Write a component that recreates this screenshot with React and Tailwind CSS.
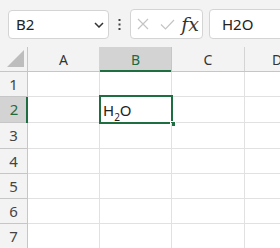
import React from "react";

const rows = [
  { n: 1, h: "h-[25px]" },
  { n: 2, h: "h-[26px]" },
  { n: 3, h: "h-[26px]" },
  { n: 4, h: "h-[25px]" },
  { n: 5, h: "h-[25px]" },
  { n: 6, h: "h-[25px]" },
  { n: 7, h: "h-[25px]" },
];

export default function App() {
  return (
    <div className="w-[280px] h-[248px] overflow-hidden bg-white text-[#262626]" style={{ fontFamily: '"Noto Sans", "Open Sans", sans-serif' }}>
      {/* toolbar */}
      <div className="h-[47px] bg-[#f3f3f3] flex items-start pt-[10px] pl-[8px]">
        <div className="w-[101px] h-[29px] bg-white border border-[#d4d4d4] rounded-[4px] flex items-center justify-between pl-[7px] pr-[4px] shrink-0">
          <span className="text-[15px] leading-none text-[#222]">B2</span>
          <svg width="10" height="6" viewBox="0 0 10 6" className="mt-[1px]">
            <path d="M1 1 L5 5 L9 1" fill="none" stroke="#333" strokeWidth="1.5" />
          </svg>
        </div>
        <div className="w-[21px] h-[29px] flex items-center justify-center shrink-0">
          <svg width="3" height="11" viewBox="0 0 3 11">
            <rect x="0.5" y="0" width="2" height="2" fill="#444" />
            <rect x="0.5" y="4.5" width="2" height="2" fill="#444" />
            <rect x="0.5" y="9" width="2" height="2" fill="#444" />
          </svg>
        </div>
        <div className="w-[73px] h-[30px] -mt-[1px] bg-white border border-[#d4d4d4] rounded-[4px] flex items-center shrink-0">
          <div className="w-[22px] flex justify-center ml-[1px]">
            <svg width="12" height="12" viewBox="0 0 12 12">
              <path d="M1 1 L11 11 M11 1 L1 11" stroke="#c4c4c4" strokeWidth="1.2" fill="none" />
            </svg>
          </div>
          <div className="w-[26px] flex justify-center">
            <svg width="15" height="11" viewBox="0 0 15 11">
              <path d="M1 5.5 L5.5 10 L14 1" stroke="#c4c4c4" strokeWidth="1.2" fill="none" />
            </svg>
          </div>
          <div className="flex-1 flex justify-center pr-[2px]">
            <span className="italic text-[19px] leading-none text-[#333]" style={{ fontFamily: '"DejaVu Serif", "Liberation Serif", serif' }}>fx</span>
          </div>
        </div>
        <div className="ml-[6px] w-[90px] h-[30px] -mt-[1px] bg-white border border-[#d4d4d4] rounded-[4px] flex items-center pl-[12px] shrink-0">
          <span className="text-[15px] leading-none text-[#222]">H2O</span>
        </div>
      </div>

      {/* header row */}
      <div className="flex h-[25px] bg-[#f3f3f3] border-b border-[#c6c6c6] text-[14px] text-[#333]">
        <div className="w-[28px] shrink-0 border-r border-[#c6c6c6] flex items-end justify-end pr-[2px] pb-[3px]">
          <svg width="18" height="18" viewBox="0 0 18 18">
            <path d="M17 0 L17 17 L0 17 Z" fill="#bdbdbd" />
          </svg>
        </div>
        <div className="w-[72px] shrink-0 border-r border-[#d4d4d4] flex items-center justify-center">A</div>
        <div className="w-[72px] shrink-0 border-r border-[#c6c6c6] bg-[#d3d3d3] relative flex items-center justify-center text-[#1d6b40]">
          B
          <div className="absolute left-0 right-0 -bottom-[1px] h-[2px] bg-[#1e6e42]" />
        </div>
        <div className="w-[73px] shrink-0 border-r border-[#d4d4d4] flex items-center justify-center">C</div>
        <div className="flex-1 flex items-center pl-[27px]">D</div>
      </div>

      {/* rows */}
      {rows.map((r) => {
        const sel = r.n === 2;
        return (
          <div key={r.n} className={`flex ${r.h}`}>
            <div
              className={
                sel
                  ? "w-[28px] shrink-0 bg-[#d3d3d3] border-b border-[#c6c6c6] relative flex items-center justify-center text-[15px] text-[#1d6b40]"
                  : "w-[28px] shrink-0 bg-[#f3f3f3] border-b border-r border-[#c6c6c6] flex items-center justify-center text-[15px] text-[#444]"
              }
            >
              {r.n}
              {sel && <div className="absolute top-0 -bottom-[1px] right-0 w-[2px] bg-[#1e6e42]" />}
            </div>
            <div className="w-[72px] shrink-0 border-b border-r border-[#e1e1e1]" />
            <div className="w-[72px] shrink-0 border-b border-r border-[#e1e1e1] relative flex items-center pl-[3px] text-[15px] text-[#222]">
              {sel && (
                <>
                  <span className="leading-none mt-[1px]">
                    H<sub className="text-[10px] align-[-3px]">2</sub>O
                  </span>
                  <div className="absolute -left-[1px] -top-[2px] w-[74px] h-[29px] border-2 border-[#1e6e42]" />
                  <div className="absolute left-[70px] top-[24px] w-[6px] h-[6px] bg-[#1e6e42] border border-white" />
                </>
              )}
            </div>
            <div className="w-[73px] shrink-0 border-b border-r border-[#e1e1e1]" />
            <div className="flex-1 border-b border-[#e1e1e1]" />
          </div>
        );
      })}
    </div>
  );
}
